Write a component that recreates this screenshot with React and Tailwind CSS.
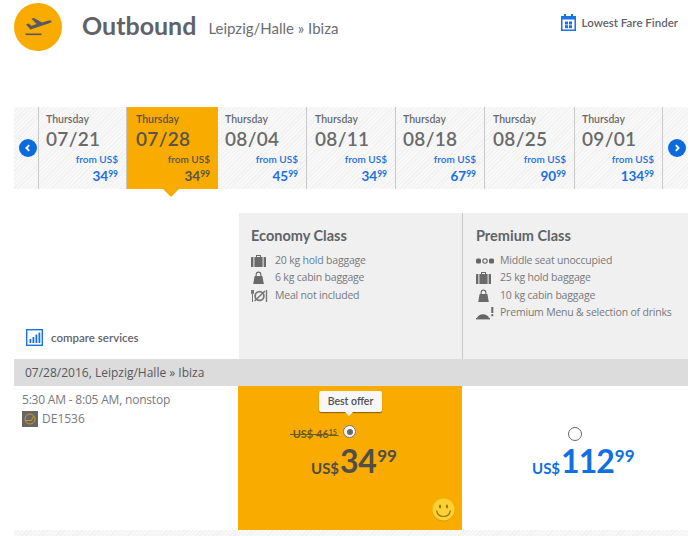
import React from "react";

const hatch = "bg-[#f4f4f4] bg-[repeating-linear-gradient(135deg,#f1f1f1_0px,#f1f1f1_1px,#f8f8f8_1px,#f8f8f8_3px)]";

const days = [
  ["07/21", "34", 88, false, "pl-[7px]"],
  ["07/28", "34", 91, true, "pl-[9px]"],
  ["08/04", "45", 89, false, "pl-[7px]"],
  ["08/11", "34", 89, false, "pl-[8px]"],
  ["08/18", "67", 89, false, "pl-[7px]"],
  ["08/25", "90", 90, false, "pl-[8px]"],
  ["09/01", "134", 88, false, "pl-[7px]"],
];

function Chevron({ dir }) {
  return (
    <span className="w-[18px] h-[18px] rounded-full bg-[#0a6bdc] flex items-center justify-center shrink-0">
      <svg width="8" height="8" viewBox="0 0 8 8" fill="none" stroke="#fff" strokeWidth="1.8">
        <path d={dir === "l" ? "M5.2 1.2 2.4 4l2.8 2.8" : "M2.8 1.2 5.6 4 2.8 6.8"} />
      </svg>
    </span>
  );
}

function Suitcase() {
  return (
    <svg width="15" height="14" viewBox="0 0 15 14" fill="#6a6a6a">
      <path d="M5 3V1h5v2H9V2H6v1z" />
      <rect x="0" y="3" width="2.4" height="10" rx=".5" />
      <rect x="3.4" y="3" width="8.2" height="10" />
      <rect x="12.6" y="3" width="2.4" height="10" rx=".5" />
    </svg>
  );
}

function Bag() {
  return (
    <svg width="15" height="14" viewBox="0 0 15 14" fill="#6a6a6a">
      <path d="M4.6 5V3.5a2.9 2.9 0 0 1 5.8 0V5H9.3V3.5a1.8 1.8 0 0 0-3.6 0V5z" />
      <path d="M3.6 5h7.8l1.4 8H2.2z" />
    </svg>
  );
}

function Meal() {
  return (
    <svg width="17" height="14" viewBox="0 0 17 14" fill="none" stroke="#777">
      <path d="M1.5 1v12M0.5 1v3.5h2V1" strokeWidth="1" />
      <circle cx="8.5" cy="7" r="4.4" strokeWidth="1.8" />
      <path d="M3.5 12 14 2" strokeWidth="1.5" />
      <path d="M15.5 1v12" strokeWidth="1.4" />
    </svg>
  );
}

function Seats() {
  return (
    <svg width="18" height="14" viewBox="0 0 18 14">
      <rect x="0" y="4.5" width="5" height="5" rx="1.6" fill="#666" />
      <circle cx="9" cy="7" r="2.2" fill="none" stroke="#666" strokeWidth="1.1" />
      <rect x="13" y="4.5" width="5" height="5" rx="1.6" fill="#666" />
    </svg>
  );
}

function Cloche() {
  return (
    <svg width="19" height="14" viewBox="0 0 19 14" fill="#666">
      <path d="M1 12a6.5 6 0 0 1 12 0z" />
      <rect x="0" y="12" width="14" height="1.4" />
      <rect x="15.3" y="1" width="2" height="6" />
      <rect x="15.3" y="8.2" width="2" height="2" />
    </svg>
  );
}

function Service({ icon, children }) {
  return (
    <div className="flex items-center h-[17.5px]">
      <span className="w-[24px] flex justify-start shrink-0">{icon}</span>
      <span>{children}</span>
    </div>
  );
}

export default function App() {
  return (
    <div className="w-[699px] h-[536px] bg-white overflow-hidden px-[14px] font-['Open_Sans',sans-serif]">
      <header className="flex items-start h-[107px]">
        <span className="w-[48px] h-[48px] mt-[3px] rounded-full bg-[#f9ab00] flex items-center justify-center shrink-0">
          <svg width="27" height="20" viewBox="0 0 27 20" fill="#555b62">
            <path d="M1 7.5 3.5 6.5l3 2.2 5-1.6L6.5 1.8 9 1l8 4.5 6-1.8c1.6-.4 3.6-.2 3.7.6.1.9-1.7 1.8-3.2 2.3L5.5 12.5 1 7.5z" />
            <rect x="0.5" y="16.5" width="16" height="1.6" />
          </svg>
        </span>
        <h1 className="ml-[20px] mt-[8px] text-[25px] leading-[34px] font-bold text-[#5f6368] font-['Lato',sans-serif]">Outbound</h1>
        <span className="ml-[12px] mt-[18px] text-[15px] leading-[20px] text-[#6a6e73] font-['Lato',sans-serif]">Leipzig/Halle » Ibiza</span>
        <div className="ml-auto mr-[7px] mt-[14px] flex items-center">
          <svg width="15" height="17" viewBox="0 0 15 17" fill="#1a73e0">
            <path fillRule="evenodd" d="M3 0h2v2h5V0h2v2h3v15H0V2h3zM1.5 5.5v10h12v-10z" />
            <rect x="4" y="7.5" width="3" height="3" />
            <rect x="8" y="7.5" width="3" height="3" />
            <rect x="4" y="11.2" width="3" height="3" />
            <rect x="8" y="11.2" width="3" height="3" />
          </svg>
          <span className="ml-[6px] text-[11.5px] leading-[16px] font-semibold text-[#5f6368] font-['Lato',sans-serif]">Lowest Fare Finder</span>
        </div>
      </header>

      <div className={`flex h-[82px] w-[674px] ${hatch}`}>
        <div className="w-[25px] border-r border-[#c8c8c8] flex items-center pl-[5px] shrink-0">
          <Chevron dir="l" />
        </div>
        {days.map(([d, p, w, active, pad]) => (
          <div
            key={d}
            style={{ width: w }}
            className={`relative shrink-0 pr-[8px] pt-[5px] ${pad} ${active ? "bg-[#f9ab00] text-[#58544a]" : "border-r border-[#c8c8c8] text-[#6a6a6a]"} font-['Lato',sans-serif]`}
          >
            <div className="text-[10.5px] leading-[14px] font-semibold">Thursday</div>
            <div className="text-[19px] leading-[24px] font-semibold mt-[1px] tracking-[0.3px]">{d}</div>
            <div className={`text-right text-[10px] leading-[14px] font-semibold mt-[1px] ${active ? "" : "text-[#1a6fe0]"}`}>from US$</div>
            <div className={`text-right font-bold leading-[14px] mt-[1px] ${active ? "" : "text-[#1a6fe0]"}`}>
              <span className="text-[13.5px]">{p}</span>
              <span className="text-[8.5px] align-[4px]">99</span>
            </div>
            {active && (
              <span className="absolute left-[36px] top-full w-0 h-0 border-x-[8px] border-x-transparent border-t-[8px] border-t-[#f9ab00]" />
            )}
          </div>
        ))}
        <div className="flex-1 flex items-center pl-[5px]">
          <Chevron dir="r" />
        </div>
      </div>

      <section className="mt-[24px] flex h-[146px] w-[674px]">
        <div className="w-[225px] flex items-end pb-[13px] pl-[12px] shrink-0">
          <svg width="17" height="17" viewBox="0 0 17 17">
            <rect x="0.7" y="0.7" width="15.6" height="15.6" fill="none" stroke="#1a73e0" strokeWidth="1.4" />
            <rect x="3.5" y="10" width="1.8" height="4" fill="#1a73e0" />
            <rect x="6.5" y="8" width="1.8" height="6" fill="#1a73e0" />
            <rect x="9.5" y="5.5" width="1.8" height="8.5" fill="#1a73e0" />
            <rect x="12.5" y="3.5" width="1.8" height="10.5" fill="#1a73e0" />
          </svg>
          <span className="ml-[8px] text-[11.5px] leading-[16px] font-semibold text-[#5f6368] font-['Lato',sans-serif]">compare services</span>
        </div>
        <div className="w-[224px] bg-[#f0f0f0] border-r border-[#c8c8c8] pl-[12px] pt-[13px] shrink-0">
          <h2 className="text-[14.5px] leading-[20px] font-bold text-[#5f6368] font-['Lato',sans-serif]">Economy Class</h2>
          <div className="mt-[6px] text-[10.5px] text-[#77797c] tracking-[-0.2px]">
            <Service icon={<Suitcase />}>20 kg <span className="text-[#5b7fa8]">hold</span> baggage</Service>
            <Service icon={<Bag />}>6 kg cabin baggage</Service>
            <Service icon={<Meal />}>Meal not included</Service>
          </div>
        </div>
        <div className="flex-1 bg-[#f0f0f0] pl-[13px] pt-[13px]">
          <h2 className="text-[14.5px] leading-[20px] font-bold text-[#5f6368] font-['Lato',sans-serif]">Premium Class</h2>
          <div className="mt-[6px] text-[10.5px] text-[#77797c] tracking-[-0.2px]">
            <Service icon={<Seats />}>Middle seat unoccupied</Service>
            <Service icon={<Suitcase />}>25 kg hold baggage</Service>
            <Service icon={<Bag />}>10 kg cabin baggage</Service>
            <Service icon={<Cloche />}>Premium Menu &amp; selection of drinks</Service>
          </div>
        </div>
      </section>

      <div className="w-[674px] h-[27px] bg-[#dcdcdc] pl-[11px] text-[12px] leading-[27px] text-[#55585c]">
        07/28/2016, Leipzig/Halle » Ibiza
      </div>

      <section className="flex h-[144px] w-[674px]">
        <div className="w-[224px] pl-[8px] pt-[5px] text-[12px] text-[#77797c] shrink-0">
          <div className="leading-[17px] tracking-[-0.2px]">5:30 AM - 8:05 AM, nonstop</div>
          <div className="flex items-center mt-[3px] leading-[16px]">
            <span className="w-[16px] h-[16px] bg-[#666] flex items-center justify-center shrink-0">
              <svg width="12" height="12" viewBox="0 0 12 12" fill="none" stroke="#c79a2c" strokeWidth="1">
                <circle cx="6" cy="6" r="5" />
                <path d="M2 7.5h5.5L9.5 3" />
              </svg>
            </span>
            <span className="ml-[4px]">DE1536</span>
          </div>
        </div>
        <div className="relative w-[225px] bg-[#f9ab00] border-r border-white shrink-0 font-['Lato',sans-serif]">
          <div className="absolute left-[81px] top-[5px] w-[63px] h-[21px] bg-[#f7f7f7] rounded-[2px] shadow-[0_1px_1px_rgba(90,60,0,0.7)] text-center text-[10.5px] leading-[21px] font-semibold text-[#4f4f4f]">
            Best offer
            <span className="absolute left-[26px] top-full w-0 h-0 border-x-[4px] border-x-transparent border-t-[4px] border-t-[#f7f7f7]" />
          </div>
          <div className="absolute left-[52px] top-[39px] text-[11px] leading-[14px] font-bold text-[#6b5a28] line-through whitespace-pre">
            {" US$ 46"}<span className="text-[7px] align-[3px]">15 </span>
          </div>
          <span className="absolute left-[105px] top-[39px] w-[13px] h-[13px] rounded-full bg-[#f7f7f7] border-[1.5px] border-[#777] flex items-center justify-center">
            <span className="w-[6px] h-[6px] rounded-full bg-[#6a6a6a]" />
          </span>
          <div className="mt-[59px] ml-[73px] flex items-start text-[#4e4e4c] font-bold">
            <span className="text-[15px] leading-[18px] mt-[14px] mr-[1px]">US$</span>
            <span className="text-[32px] leading-[32px] tracking-[-0.5px]">34</span>
            <span className="text-[17px] leading-[18px] ml-[1px] mt-[2px]">99</span>
          </div>
          <svg className="absolute left-[194px] top-[112px]" width="23" height="24" viewBox="0 0 23 24">
            <circle cx="11.5" cy="12.5" r="11" fill="#d99a10" />
            <circle cx="11.5" cy="11.5" r="11" fill="#fbd134" />
            <ellipse cx="8" cy="8.5" rx="1.1" ry="2" fill="#9a7410" />
            <ellipse cx="15" cy="8.5" rx="1.1" ry="2" fill="#9a7410" />
            <path d="M4.5 12.5c1 4.5 4 6 7 6s6-1.500 7-6" fill="none" stroke="#9a7410" strokeWidth="1.2" />
          </svg>
        </div>
        <div className="flex-1 relative font-['Lato',sans-serif]">
          <span className="absolute left-[105px] top-[41px] w-[14px] h-[14px] rounded-full border-[1.5px] border-[#6a6a6a] bg-white" />
          <div className="mt-[59px] ml-[69px] flex items-start text-[#0f6fe3] font-bold">
            <span className="text-[15px] leading-[18px] mt-[14px] mr-[1px]">US$</span>
            <span className="text-[32px] leading-[32px] tracking-[-1px]">112</span>
            <span className="text-[17px] leading-[18px] ml-[1px] mt-[2px]">99</span>
          </div>
        </div>
      </section>

      <div className={`w-[674px] h-[6px] ${hatch}`} />
    </div>
  );
}
